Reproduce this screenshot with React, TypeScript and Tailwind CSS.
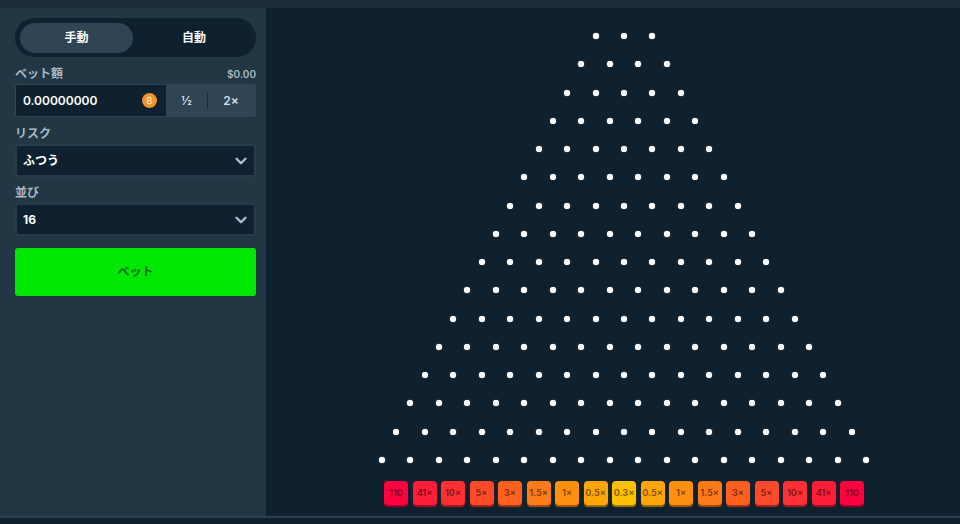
import { ChevronDown } from "lucide-react";

const FONT = "font-['Inter','Noto_Sans_CJK_JP',sans-serif]";
const rows = Array.from({ length: 16 }, (_, i) => i + 3);
const buckets: [string, string, string][] = [
  ["110", "#ff003f", "#a6002a"],
  ["41×", "#ff1d38", "#a60f25"],
  ["10×", "#ff3033", "#a61a1f"],
  ["5×", "#ff4a2b", "#a6261a"],
  ["3×", "#ff6020", "#a63510"],
  ["1.5×", "#ff7a1a", "#a64d0d"],
  ["1×", "#ff9010", "#a65c08"],
  ["0.5×", "#ffa60a", "#a66a04"],
  ["0.3×", "#ffc000", "#a67c00"],
  ["0.5×", "#ffa60a", "#a66a04"],
  ["1×", "#ff9010", "#a65c08"],
  ["1.5×", "#ff7a1a", "#a64d0d"],
  ["3×", "#ff6020", "#a63510"],
  ["5×", "#ff4a2b", "#a6261a"],
  ["10×", "#ff3033", "#a61a1f"],
  ["41×", "#ff1d38", "#a60f25"],
  ["110", "#ff003f", "#a6002a"],
];

function Select({ value }: { value: string }) {
  return (
    <div className="flex h-[33px] items-center justify-between rounded-[3px] border-2 border-[#263c4a] bg-[#0f212e] pl-[6px] pr-[4px]">
      <span className="text-[12px] font-bold text-white">{value}</span>
      <ChevronDown className="h-[18px] w-[18px] text-[#b1bad3]" strokeWidth={3.2} />
    </div>
  );
}

export default function App() {
  return (
    <div className={`flex h-[524px] w-[960px] flex-col overflow-hidden bg-[#1a2c38] pt-2 ${FONT}`}>
      <div className="flex h-[508px]">
        <aside className="flex w-[266px] shrink-0 flex-col bg-[#213743] pl-[15px] pr-[10px] pt-[10px]">
          <div className="flex h-[39px] items-center gap-[2px] rounded-full bg-[#0f212e] px-[5px]">
            <div className="flex h-[30px] w-[113px] items-center justify-center rounded-full bg-[#2f4553] text-[12px] font-bold text-white">手動</div>
            <div className="flex h-[30px] flex-1 items-center justify-center pl-[2px] text-[12px] font-bold text-white">自動</div>
          </div>
          <div className="mt-[8px] flex h-[18px] items-center justify-between">
            <span className="text-[12px] font-semibold text-[#aab6c4]">ベット額</span>
            <span className="text-[10px] font-semibold text-[#aab6c4]">$0.00</span>
          </div>
          <div className="mt-[1px] flex h-[33px] rounded-[3px] bg-[#2f4553]">
            <div className="my-[1px] ml-[1px] flex w-[150px] items-center justify-between bg-[#0f212e] pl-[7px] pr-[9px]">
              <span className="text-[12px] font-semibold text-white">0.00000000</span>
              <span className="flex h-[15px] w-[15px] items-center justify-center rounded-full bg-[#f0942a] text-[9px] font-bold text-[#fcd9a8]">₿</span>
            </div>
            <div className="flex flex-1 items-center text-[12px] font-semibold text-[#d5dceb]">
              <span className="w-[41px] text-center">½</span>
              <span className="h-[16px] w-[1px] bg-[#1a2c38]" />
              <span className="flex-1 pr-[2px] text-center">2×</span>
            </div>
          </div>
          <div className="mb-[1px] mt-[8px] flex h-[18px] items-center text-[12px] font-semibold text-[#aab6c4]">リスク</div>
          <Select value="ふつう" />
          <div className="mb-[1px] mt-[7px] flex h-[18px] items-center text-[12px] font-semibold text-[#aab6c4]">並び</div>
          <Select value="16" />
          <div className="mt-[12px] flex h-[48px] items-center justify-center rounded-[3px] bg-[#00e701] text-[12px] font-semibold text-[#0b6a1a]">ベット</div>
        </aside>
        <main className="flex flex-1 flex-col items-center bg-[#0f212e] pl-[22px] pt-[25px]">
          <div className="flex flex-col gap-[22.27px]">
            {rows.map((n) => (
              <div key={n} className="flex justify-center gap-[22.47px]">
                {Array.from({ length: n }, (_, i) => (
                  <span key={i} className="h-[6px] w-[6px] rounded-full bg-white shadow-[0_0_1px_#ffffff]" />
                ))}
              </div>
            ))}
          </div>
          <div className="mt-[18px] flex gap-[4.5px]">
            {buckets.map(([label, bg, shade], i) => (
              <div
                key={i}
                className="flex h-[24px] w-[24px] items-center justify-center rounded-[4px] text-[9px] font-bold text-[#00000080]"
                style={{ backgroundColor: bg, boxShadow: `0 2px 1px ${shade}` }}
              >
                {label}
              </div>
            ))}
          </div>
        </main>
      </div>
      <div className="h-[2px] bg-[#2a3f4d]" />
      <div className="flex-1 bg-[#0f212e]" />
    </div>
  );
}
